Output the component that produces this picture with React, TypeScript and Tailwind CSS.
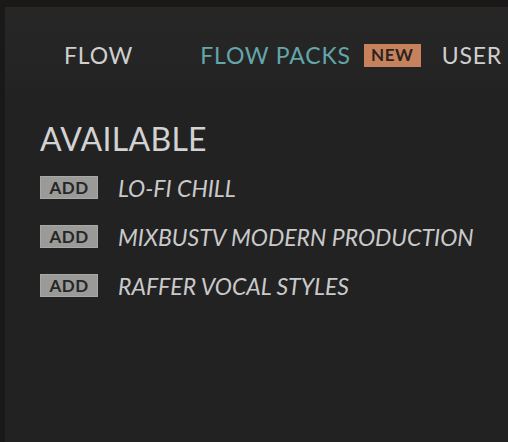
import React from 'react';

const packs = ['LO-FI CHILL', 'MIXBUSTV MODERN PRODUCTION', 'RAFFER VOCAL STYLES'];

export default function App() {
  return (
    <div className="w-[508px] h-[442px] bg-[#1a1918] pt-[7px] pl-[5px] overflow-hidden" style={{ fontFamily: 'Lato, "Open Sans", sans-serif' }}>
      <div className="h-full bg-[#232223] flex flex-col">
        <div className="h-[96px] bg-gradient-to-b from-[#272626] via-[#262525] to-[#232223] flex items-center pl-[59px] whitespace-nowrap">
          <span className="text-[23px] text-[#cfcfcf] tracking-[0.8px]">FLOW</span>
          <span className="ml-[67px] text-[23px] text-[#63a6ab] tracking-[0.8px]">FLOW PACKS</span>
          <span className="ml-[13px] w-[57px] h-[23px] bg-[#c7825d] text-[#2b2320] text-[17px] font-bold flex items-center justify-center tracking-[0.5px]">NEW</span>
          <span className="ml-[21px] text-[23px] text-[#cfcfcf] tracking-[0.8px]">USER</span>
        </div>
        <div className="pl-[35px] pt-[17px]">
          <h2 className="text-[32px] leading-[38px] text-[#d2d2d2] tracking-[0.3px]">AVAILABLE</h2>
          <ul className="mt-[18px] flex flex-col gap-[26px]">
            {packs.map((p) => (
              <li key={p} className="flex items-center">
                <span className="w-[58px] h-[23px] bg-[#9a9a98] border border-[#a8a8a6] text-[#262626] text-[17px] font-bold flex items-center justify-center tracking-[0.5px]">ADD</span>
                <span className="ml-[20px] text-[23px] italic text-[#cacaca] leading-[22px]">{p}</span>
              </li>
            ))}
          </ul>
        </div>
      </div>
    </div>
  );
}
